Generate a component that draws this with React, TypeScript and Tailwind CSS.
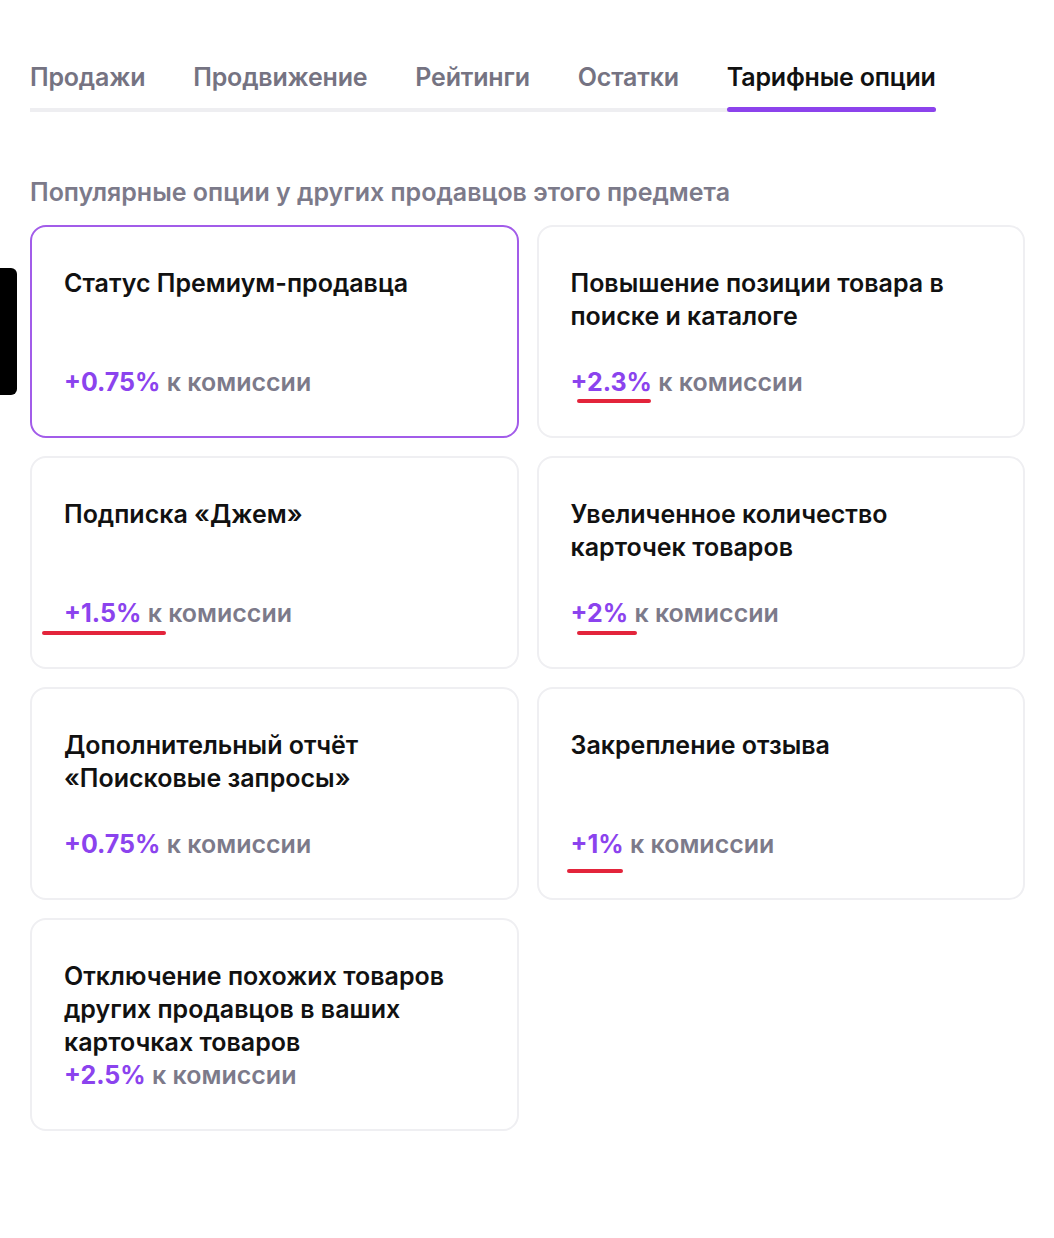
import React from "react";

type Card = {
  title: string;
  pct: string;
  selected?: boolean;
  mark?: { left: number; width: number; top: number };
};

const cards: Card[] = [
  { title: "Статус Премиум-продавца", pct: "+0.75%", selected: true },
  {
    title: "Повышение позиции товара в поиске и каталоге",
    pct: "+2.3%",
    mark: { left: 6, width: 74, top: 33 },
  },
  { title: "Подписка «Джем»", pct: "+1.5%", mark: { left: -22, width: 124, top: 34 } },
  {
    title: "Увеличенное количество карточек товаров",
    pct: "+2%",
    mark: { left: 6, width: 60, top: 34 },
  },
  { title: "Дополнительный отчёт «Поисковые запросы»", pct: "+0.75%" },
  { title: "Закрепление отзыва", pct: "+1%", mark: { left: -4, width: 56, top: 41 } },
  { title: "Отключение похожих товаров других продавцов в ваших карточках товаров", pct: "+2.5%" },
];

const tabs = ["Продажи", "Продвижение", "Рейтинги", "Остатки", "Тарифные опции"];

export default function App() {
  return (
    <div
      className="relative min-h-[1238px] w-[1054px] bg-white pl-[30px] pr-[29px] pt-[61px]"
      style={{ fontFamily: "Inter, 'Noto Sans', sans-serif" }}
    >
      <div className="absolute left-0 top-[268px] h-[127px] w-[17px] rounded-r-[6px] bg-black" />

      <div className="inline-flex gap-[48px] border-b-4 border-[#eeeef1]">
        {tabs.map((t, i) => {
          const active = i === tabs.length - 1;
          return (
            <div key={t} className="relative pb-[15px]">
              <span
                className={
                  "text-[25px] leading-[32px] font-semibold tracking-[-0.2px] " +
                  (active ? "text-[#111]" : "text-[#757382]")
                }
              >
                {t}
              </span>
              {active && (
                <div className="absolute bottom-[-4px] left-0 right-0 h-[5px] rounded-full bg-[#8c43ec]" />
              )}
            </div>
          );
        })}
      </div>

      <div className="mt-[65px] text-[25px] leading-[30px] font-semibold text-[#7c7a8a]">
        Популярные опции у других продавцов этого предмета
      </div>

      <div className="mt-[18px] grid grid-cols-2 gap-x-[18px] gap-y-[18px]">
        {cards.map((c) => (
          <div
            key={c.title}
            className={
              "rounded-[16px] border-2 px-[32px] pt-[40px] pb-[37px] " +
              (c.selected ? "border-[#a25ce9]" : "border-[#efeff2]")
            }
          >
            <div className="min-h-[99px] text-[25px] leading-[33px] font-semibold text-[#111]">
              {c.title}
            </div>
            <div className="relative text-[25px] leading-[33px] font-semibold">
              <span className="font-bold text-[#8b43ee]">{c.pct}</span>{" "}
              <span className="text-[#7c7a8a]">к комиссии</span>
              {c.mark && (
                <span
                  className="absolute h-[4px] rounded-full bg-[#e3243b]"
                  style={{ left: c.mark.left, width: c.mark.width, top: c.mark.top }}
                />
              )}
            </div>
          </div>
        ))}
      </div>
    </div>
  );
}
